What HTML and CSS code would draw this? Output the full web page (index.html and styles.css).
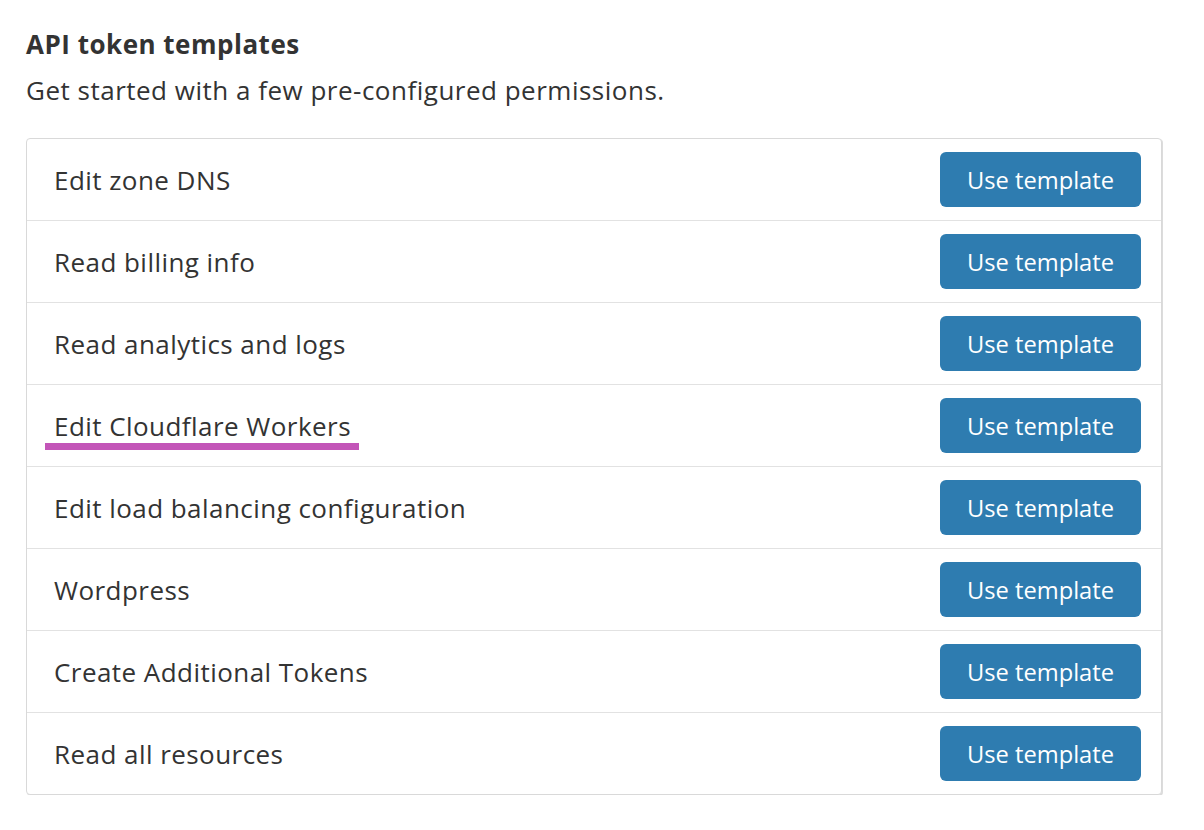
FILE: index.html
```html
<!DOCTYPE html>
<html>
<head>
<meta charset="utf-8">
<link rel="stylesheet" href="styles.css">
</head>
<body>
<div class="page">
  <h2 class="title">API token templates</h2>
  <p class="subtitle">Get started with a few pre-configured permissions.</p>
  <div class="card">
    <div class="row"><span class="name">Edit zone DNS</span><button class="btn">Use template</button></div>
    <div class="row"><span class="name">Read billing info</span><button class="btn">Use template</button></div>
    <div class="row"><span class="name">Read analytics and logs</span><button class="btn">Use template</button></div>
    <div class="row"><span class="name marked">Edit Cloudflare Workers</span><button class="btn">Use template</button></div>
    <div class="row"><span class="name">Edit load balancing configuration</span><button class="btn">Use template</button></div>
    <div class="row"><span class="name">Wordpress</span><button class="btn">Use template</button></div>
    <div class="row"><span class="name">Create Additional Tokens</span><button class="btn">Use template</button></div>
    <div class="row"><span class="name">Read all resources</span><button class="btn">Use template</button></div>
  </div>
</div>
</body>
</html>
```

FILE: styles.css
```css
* { box-sizing: border-box; }
html, body { margin: 0; padding: 0; background: #ffffff; }
body {
  font-family: "Open Sans", "Noto Sans", sans-serif;
  color: #333333;
}
.page {
  padding: 26px 0 0 26px;
  width: 1164px;
}
.title {
  margin: 0;
  font-size: 26px;
  line-height: 36px;
  font-weight: 700;
  letter-spacing: 0.5px;
  color: #333333;
}
.subtitle {
  margin: 10px 0 0 0;
  font-size: 26px;
  line-height: 36px;
  letter-spacing: 0.5px;
  color: #333333;
}
.card {
  margin-top: 30px;
  width: 1136px;
  border: 1px solid #d9d9d9;
  border-radius: 4px;
  box-shadow: 1px 1px 0 0 #dcdcdc;
  background: #fff;
}
.row {
  height: 82px;
  display: flex;
  align-items: center;
  justify-content: space-between;
  padding: 0 20px 0 27px;
  border-bottom: 1px solid #e2e2e2;
}
.row:last-child { border-bottom: none; height: 81px; }
.name {
  font-size: 26px;
  line-height: 36px;
  letter-spacing: 0.45px;
  color: #333333;
  position: relative;
}
.marked::after {
  content: "";
  position: absolute;
  left: -9px;
  right: -8px;
  top: 35px;
  height: 7px;
  background: #c355b8;
}
.btn {
  width: 201px;
  height: 55px;
  border: none;
  border-radius: 6px;
  background: #2e7cb0;
  color: #ffffff;
  font-family: "Open Sans", "Noto Sans", sans-serif;
  font-size: 23.7px;
  padding: 0;
  cursor: pointer;
}
```
